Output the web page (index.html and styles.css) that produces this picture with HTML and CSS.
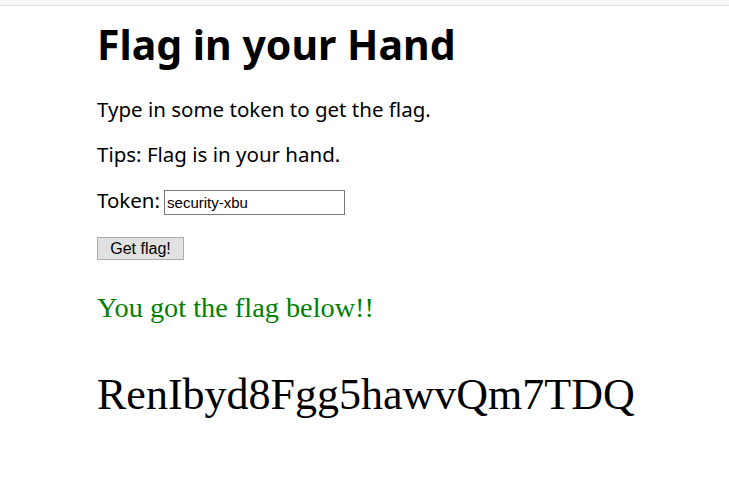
FILE: index.html
```html
<!DOCTYPE html>
<html>
<head>
<meta charset="utf-8">
<link rel="stylesheet" href="styles.css">
</head>
<body>
<div class="topbar"></div>
<div class="content">
  <h1 class="title">Flag in your Hand</h1>
  <p class="line first">Type in some token to get the flag.</p>
  <p class="line">Tips: Flag is in your hand.</p>
  <div class="line token-row"><span>Token:</span><input class="token" type="text" value="security-xbu"></div>
  <div class="btn-row"><button class="btn">Get flag!</button></div>
  <p class="result">You got the flag below!!</p>
  <p class="flag">RenIbyd8Fgg5hawvQm7TDQ</p>
</div>
</body>
</html>
```
FILE: styles.css
```css
html, body {
  margin: 0;
  padding: 0;
  background: #fff;
}
.topbar {
  height: 5px;
  background: #f8f8f8;
  border-bottom: 1px solid #e0e0e0;
}
.content {
  padding-left: 97px;
  font-family: "Noto Sans", sans-serif;
  color: #000;
}
.title {
  margin: 14px 0 0 0;
  font-size: 41px;
  font-weight: bold;
  line-height: 48px;
}
.line {
  margin: 21px 0 0 0;
  font-size: 20.5px;
  line-height: 24px;
}
.line.first {
  margin-top: 29px;
}
.token-row {
  margin-top: 22px;
  display: flex;
  align-items: baseline;
  gap: 4px;
}
.token {
  width: 175px;
  height: 21px;
  padding: 1px 2px;
  margin: 0;
  border: 1px solid #767676;
  font-family: "Liberation Sans", sans-serif;
  font-size: 15px;
  color: #000;
  box-sizing: content-box;
}
.btn-row {
  margin-top: 22px;
}
.btn {
  display: block;
  font-family: "Liberation Sans", sans-serif;
  font-size: 16px;
  color: #000;
  background: #e1e1e1;
  border: 1px solid #adadad;
  padding: 0;
  height: 23px;
  width: 87px;
  border-radius: 0;
}
.result {
  margin: 32px 0 0 0;
  font-family: "Liberation Serif", serif;
  font-size: 28.3px;
  line-height: 32px;
  color: #008000;
}
.flag {
  margin: 47px 0 0 0;
  font-family: "Liberation Serif", serif;
  font-size: 44px;
  line-height: 48px;
}
```
